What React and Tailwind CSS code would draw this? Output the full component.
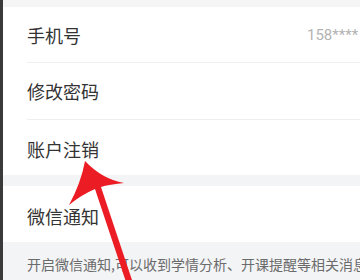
import React from "react";

const cjk = { fontFamily: '"Noto Sans CJK SC", "Noto Sans", sans-serif' };

function Row({ h, pt = "pt-[1px]", children, extra }) {
  return (
    <div className={`flex items-center pl-[24px] ${pt} ${h}`}>
      <div className="w-[280px] shrink-0 text-[18px] leading-[24px] text-[#333333]" style={cjk}>
        {children}
      </div>
      {extra}
    </div>
  );
}

export default function App() {
  return (
    <div className="relative flex w-[360px] h-[280px] overflow-hidden bg-white">
      <div className="w-[3px] shrink-0 bg-[#3a3a3a]" />
      <div className="flex flex-1 flex-col min-w-0">
        <div className="h-[7px] bg-[#f5f5f6]" />
        <Row
          h="h-[55px]"
          extra={
            <div
              className="whitespace-nowrap text-[15px] leading-[20px] text-[#b3b3b3]"
              style={{ fontFamily: 'Roboto, "Liberation Sans", sans-serif' }}
            >
              158****
            </div>
          }
        >
          手机号
        </Row>
        <div className="ml-[24px] h-px bg-[#eeeeee]" />
        <Row h="h-[56px]" pt="pt-0">修改密码</Row>
        <div className="ml-[24px] h-px bg-[#eeeeee]" />
        <Row h="h-[55px]" pt="pt-[2px]">账户注销</Row>
        <div className="h-[11px] bg-[#f3f4f6]" />
        <Row h="h-[56px]" pt="pt-[3px]">微信通知</Row>
        <div className="flex-1 bg-[#f3f4f6] pl-[24px] pt-[13px]">
          <div
            className="whitespace-nowrap text-[14px] leading-[18px] text-[#6b6b6b]"
            style={cjk}
          >
            开启微信通知,可以收到学情分析、开课提醒等相关消息
          </div>
        </div>
      </div>
      <svg
        className="pointer-events-none absolute left-0 top-0"
        width="360"
        height="280"
        viewBox="0 0 360 280"
      >
        <path
          d="M85 161 Q102 179 124 183 Q106 185 101 187 L135 289 L129 291 L95 189 Q81 195 69 205 Q81 183 85 161 Z"
          fill="#ec1c24"
        />
      </svg>
    </div>
  );
}
